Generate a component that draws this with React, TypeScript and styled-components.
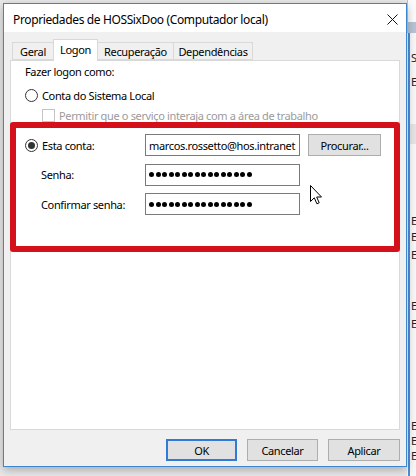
import React from "react";
import styled, { createGlobalStyle } from "styled-components";

const Global = createGlobalStyle`
  html, body { margin: 0; padding: 0; }
  body { background: #ececec; font-family: "Noto Sans", "Open Sans", sans-serif; }
  * { box-sizing: border-box; }
`;

const UI_FONT = `"Noto Sans", "Open Sans", sans-serif`;

const Desktop = styled.div`
  width: 416px;
  height: 476px;
  overflow: hidden;
  display: flex;
  align-items: flex-start;
  padding: 3px 0 0 3px;
  background: #e9e9e9;
  font-family: ${UI_FONT};
  font-size: 11px;
  letter-spacing: -0.35px;
`;

const Window = styled.div`
  position: relative;
  width: 404px;
  height: 464px;
  flex: none;
  display: flex;
  flex-direction: column;
  border: 1px solid #3d86cf;
  background: #f0f0f0;
  box-shadow: 0 3px 9px rgba(0, 0, 0, 0.28);
  z-index: 1;
`;

const TitleBar = styled.div`
  height: 28px;
  flex: none;
  display: flex;
  align-items: center;
  justify-content: space-between;
  padding: 2px 8px 0 9px;
  background: #ffffff;
`;

const Title = styled.span`
  font-size: 12px;
  color: #000;
  letter-spacing: -0.37px;
`;

const Body = styled.div`
  flex: 1;
  display: flex;
  flex-direction: column;
  padding: 7px 6px 0 6px;
`;

const TabStrip = styled.div`
  height: 21px;
  flex: none;
  display: flex;
  align-items: flex-end;
  padding-left: 2px;
  position: relative;
  z-index: 2;
`;

const Tab = styled.div<{ $w: number; $active?: boolean }>`
  width: ${(p) => p.$w}px;
  height: ${(p) => (p.$active ? 22 : 18)}px;
  margin-bottom: ${(p) => (p.$active ? -1 : 0)}px;
  display: flex;
  align-items: ${(p) => (p.$active ? "flex-start" : "center")};
  justify-content: center;
  padding-top: ${(p) => (p.$active ? 2 : 0)}px;
  color: #000;
  background: ${(p) => (p.$active ? "#ffffff" : "#f0f0f0")};
  border: 1px solid #d9d9d9;
  border-bottom: ${(p) => (p.$active ? "none" : "1px solid #d9d9d9")};
  margin-left: -1px;
  white-space: nowrap;
  &:first-child { margin-left: 0; }
`;

const Panel = styled.div`
  height: 370px;
  flex: none;
  background: #ffffff;
  border: 1px solid #d9d9d9;
  display: flex;
  flex-direction: column;
  position: relative;
`;

const Heading = styled.div`
  margin: 3px 0 0 14px;
  height: 16px;
  line-height: 16px;
  color: #000;
`;

const OptionRow = styled.label<{ $indent: number; $top: number; $disabled?: boolean }>`
  display: flex;
  align-items: center;
  gap: 4px;
  height: 16px;
  margin: ${(p) => p.$top}px 0 0 ${(p) => p.$indent}px;
  color: ${(p) => (p.$disabled ? "#9b9b9b" : "#000")};
  white-space: nowrap;
`;

const Radio = styled.span<{ $checked?: boolean }>`
  width: 13px;
  height: 13px;
  flex: none;
  border-radius: 50%;
  border: 1px solid #333;
  background: #fff;
  display: flex;
  align-items: center;
  justify-content: center;
  &::after {
    content: "";
    width: 7px;
    height: 7px;
    border-radius: 50%;
    background: ${(p) => (p.$checked ? "#333" : "transparent")};
  }
`;

const CheckBox = styled.span`
  width: 13px;
  height: 13px;
  flex: none;
  border: 1px solid #c4c4c4;
  background: #fff;
`;

const Highlight = styled.div`
  margin: -1px 0 0 -1px;
  width: 390px;
  height: 130px;
  border: 6px solid #d4111a;
  border-radius: 3px;
  padding: 6px 0 0 9px;
  display: grid;
  grid-template-columns: 112px 155px 73px;
  grid-auto-rows: 22px;
  column-gap: 8px;
  row-gap: 7.5px;
  align-items: center;
  position: relative;
  z-index: 1;
`;

const FieldLabel = styled.span`
  padding-left: 16px;
  color: #000;
  white-space: nowrap;
`;

const TextBox = styled.div`
  height: 22px;
  border: 1px solid #7a7a7a;
  background: #fff;
  display: flex;
  align-items: center;
  padding: 0 3px;
  color: #000;
  white-space: nowrap;
  overflow: hidden;
`;

const Dots = styled.div`
  display: flex;
  gap: 1.5px;
`;

const Dot = styled.span`
  width: 5px;
  height: 5px;
  border-radius: 50%;
  background: #000;
`;

const Button = styled.button<{ $w: number; $default?: boolean }>`
  width: ${(p) => p.$w}px;
  height: 22px;
  padding: 0;
  font-family: ${UI_FONT};
  font-size: 11px;
  letter-spacing: -0.35px;
  color: #000;
  background: #e1e1e1;
  border: ${(p) => (p.$default ? "2px solid #2f7bd6" : "1px solid #adadad")};
`;

const Footer = styled.div`
  flex: 1;
  display: flex;
  justify-content: flex-end;
  align-items: flex-start;
  gap: 10px;
  padding-top: 9px;
`;

const Pointer = styled.svg`
  position: absolute;
  left: 299px;
  top: 124px;
  z-index: 3;
`;

const BehindStrip = styled.div`
  flex: 1;
  align-self: stretch;
  margin-top: -3px;
  height: 476px;
  display: flex;
  flex-direction: column;
  background: #f7f7f7;
  position: relative;
`;

const StripHeader = styled.div`
  height: 22px;
  background: #fbfbfb;
  border-left: 1px solid #b8c4d2;
`;

const StripBand = styled.div`
  height: 11px;
  background: #b5c3d4;
`;

const StripList = styled.div`
  flex: 1;
  display: flex;
  flex-direction: column;
  border-left: 2px solid #4c8fd6;
  margin-left: 1px;
  padding-top: 16px;
`;

const StripRow = styled.div<{ $shade?: boolean; $h?: number }>`
  height: ${(p) => p.$h ?? 17}px;
  line-height: 17px;
  font-size: 11px;
  color: #222;
  padding-left: 1px;
  background: ${(p) => (p.$shade ? "#e4e4e4" : "transparent")};
  white-space: nowrap;
`;

const behindRows: { text: string; shade?: boolean; h?: number }[] = [
  { text: "St", h: 24 },
  { text: "Er" },
  { text: "" },
  { text: "" },
  { text: "", shade: true, h: 20 },
  { text: "" },
  { text: "" },
  { text: "" },
  { text: "" },
  { text: "Er", h: 16 },
  { text: "Er", h: 18 },
  { text: "Er" },
  { text: "" },
  { text: "" },
  { text: "Er", h: 18 },
  { text: "Er" },
  { text: "" },
  { text: "" },
  { text: "" },
  { text: "" },
  { text: "" },
  { text: "Er", h: 15 },
  { text: "Er", h: 15 },
  { text: "Er", h: 15 },
];

const CloseIcon = () => (
  <svg width="11" height="11" viewBox="0 0 11 11">
    <path d="M0.5 0.5 L10.5 10.5 M10.5 0.5 L0.5 10.5" stroke="#111" strokeWidth="1" />
  </svg>
);

export default function App() {
  const dots = Array.from({ length: 16 });
  return (
    <>
      <Global />
      <Desktop>
        <Window>
          <TitleBar>
            <Title>Propriedades de HOSSixDoo (Computador local)</Title>
            <CloseIcon />
          </TitleBar>
          <Body>
            <TabStrip>
              <Tab $w={42}>Geral</Tab>
              <Tab $w={45} $active>
                Logon
              </Tab>
              <Tab $w={77}>Recuperação</Tab>
              <Tab $w={80}>Dependências</Tab>
            </TabStrip>
            <Panel>
              <Heading>Fazer logon como:</Heading>
              <OptionRow $indent={14} $top={7}>
                <Radio />
                Conta do Sistema Local
              </OptionRow>
              <OptionRow $indent={31} $top={4} $disabled>
                <CheckBox />
                Permitir que o serviço interaja com a área de trabalho
              </OptionRow>
              <Highlight>
                <OptionRow $indent={0} $top={0}>
                  <Radio $checked />
                  Esta conta:
                </OptionRow>
                <TextBox>marcos.rossetto@hos.intranet</TextBox>
                <Button $w={73}>Procurar...</Button>
                <FieldLabel>Senha:</FieldLabel>
                <TextBox>
                  <Dots>
                    {dots.map((_, i) => (
                      <Dot key={i} />
                    ))}
                  </Dots>
                </TextBox>
                <span />
                <FieldLabel>Confirmar senha:</FieldLabel>
                <TextBox>
                  <Dots>
                    {dots.map((_, i) => (
                      <Dot key={i} />
                    ))}
                  </Dots>
                </TextBox>
                <span />
              </Highlight>
              <Pointer width="13" height="20" viewBox="0 0 13 20">
                <path
                  d="M0.5 0.5 L0.5 16.5 L4.3 12.8 L6.9 18.8 L9.2 17.8 L6.7 12 L11.5 12 Z"
                  fill="#fff"
                  stroke="#000"
                  strokeWidth="1"
                  strokeLinejoin="round"
                />
              </Pointer>
            </Panel>
            <Footer>
              <Button $w={71} $default>
                OK
              </Button>
              <Button $w={71}>Cancelar</Button>
              <Button $w={72}>Aplicar</Button>
            </Footer>
          </Body>
        </Window>
        <BehindStrip>
          <StripHeader />
          <StripBand />
          <StripList>
            {behindRows.map((r, i) => (
              <StripRow key={i} $shade={r.shade} $h={r.h}>
                {r.text}
              </StripRow>
            ))}
          </StripList>
        </BehindStrip>
      </Desktop>
    </>
  );
}
